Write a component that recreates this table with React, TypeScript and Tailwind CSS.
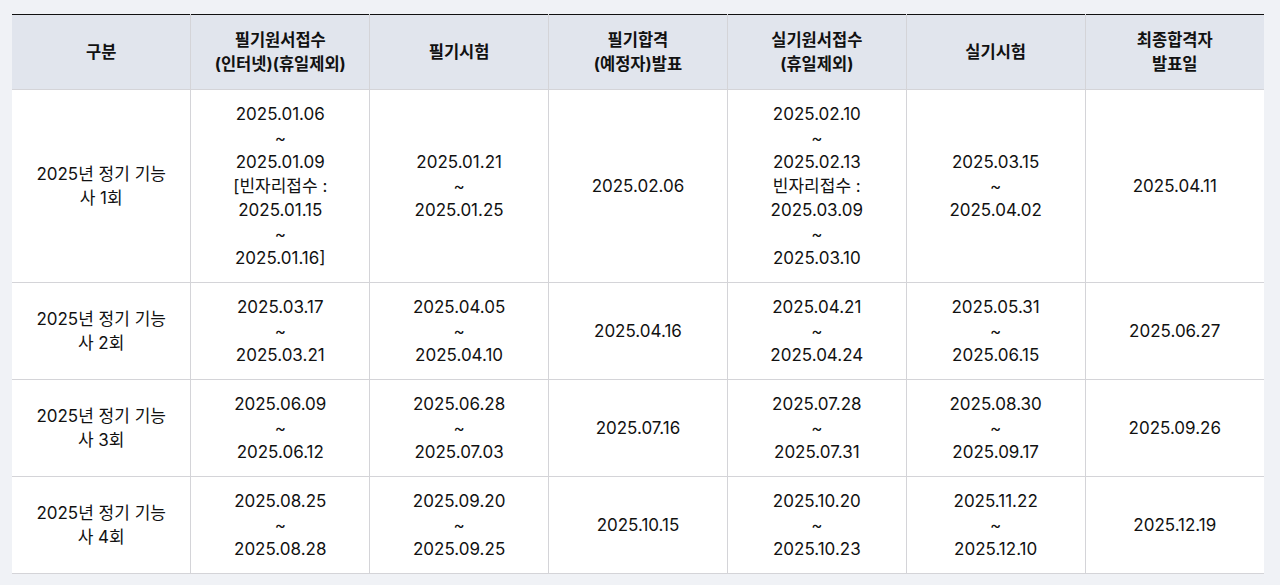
import React from "react";

type Row = {
  name: string;
  cells: string[][];
};

const headers: string[][] = [
  ["구분"],
  ["필기원서접수", "(인터넷)(휴일제외)"],
  ["필기시험"],
  ["필기합격", "(예정자)발표"],
  ["실기원서접수", "(휴일제외)"],
  ["실기시험"],
  ["최종합격자", "발표일"],
];

const rows: Row[] = [
  {
    name: "2025년 정기 기능사 1회",
    cells: [
      ["2025.01.06", "~", "2025.01.09", "[빈자리접수 :", "2025.01.15", "~", "2025.01.16]"],
      ["2025.01.21", "~", "2025.01.25"],
      ["2025.02.06"],
      ["2025.02.10", "~", "2025.02.13", "빈자리접수 :", "2025.03.09", "~", "2025.03.10"],
      ["2025.03.15", "~", "2025.04.02"],
      ["2025.04.11"],
    ],
  },
  {
    name: "2025년 정기 기능사 2회",
    cells: [
      ["2025.03.17", "~", "2025.03.21"],
      ["2025.04.05", "~", "2025.04.10"],
      ["2025.04.16"],
      ["2025.04.21", "~", "2025.04.24"],
      ["2025.05.31", "~", "2025.06.15"],
      ["2025.06.27"],
    ],
  },
  {
    name: "2025년 정기 기능사 3회",
    cells: [
      ["2025.06.09", "~", "2025.06.12"],
      ["2025.06.28", "~", "2025.07.03"],
      ["2025.07.16"],
      ["2025.07.28", "~", "2025.07.31"],
      ["2025.08.30", "~", "2025.09.17"],
      ["2025.09.26"],
    ],
  },
  {
    name: "2025년 정기 기능사 4회",
    cells: [
      ["2025.08.25", "~", "2025.08.28"],
      ["2025.09.20", "~", "2025.09.25"],
      ["2025.10.15"],
      ["2025.10.20", "~", "2025.10.23"],
      ["2025.11.22", "~", "2025.12.10"],
      ["2025.12.19"],
    ],
  },
];

function Lines({ lines }: { lines: string[] }) {
  return (
    <>
      {lines.map((l, i) => (
        <div key={i}>{l}</div>
      ))}
    </>
  );
}

export default function App() {
  return (
    <div className="min-h-screen bg-[#f0f2f6] pt-[14px] pl-3 pr-4 font-['Inter','Noto_Sans_CJK_KR',sans-serif] text-[#111111]">
      <table className="w-full table-fixed border-collapse border-t border-t-[#111111]">
        <thead>
          <tr className="bg-[#e1e5ed]">
            {headers.map((h, i) => (
              <th
                key={i}
                className={`border-b border-[#d4d4d8] px-3 py-[13px] text-center text-[16.5px] font-bold leading-6 ${
                  i < headers.length - 1 ? "border-r" : ""
                }`}>
                <Lines lines={h} />
              </th>
            ))}
          </tr>
        </thead>
        <tbody className="bg-white">
          {rows.map((r, ri) => (
            <tr key={ri}>
              <td className="border-b border-r border-[#d4d4d8] px-[24px] py-3 text-center align-middle text-[17px] leading-6">
                {r.name}
              </td>
              {r.cells.map((c, ci) => (
                <td
                  key={ci}
                  className={`border-b border-[#d4d4d8] px-2 py-3 text-center align-middle text-[17px] leading-6 ${
                    ci < r.cells.length - 1 ? "border-r" : ""
                  }`}>
                  <Lines lines={c} />
                </td>
              ))}
            </tr>
          ))}
        </tbody>
      </table>
    </div>
  );
}
